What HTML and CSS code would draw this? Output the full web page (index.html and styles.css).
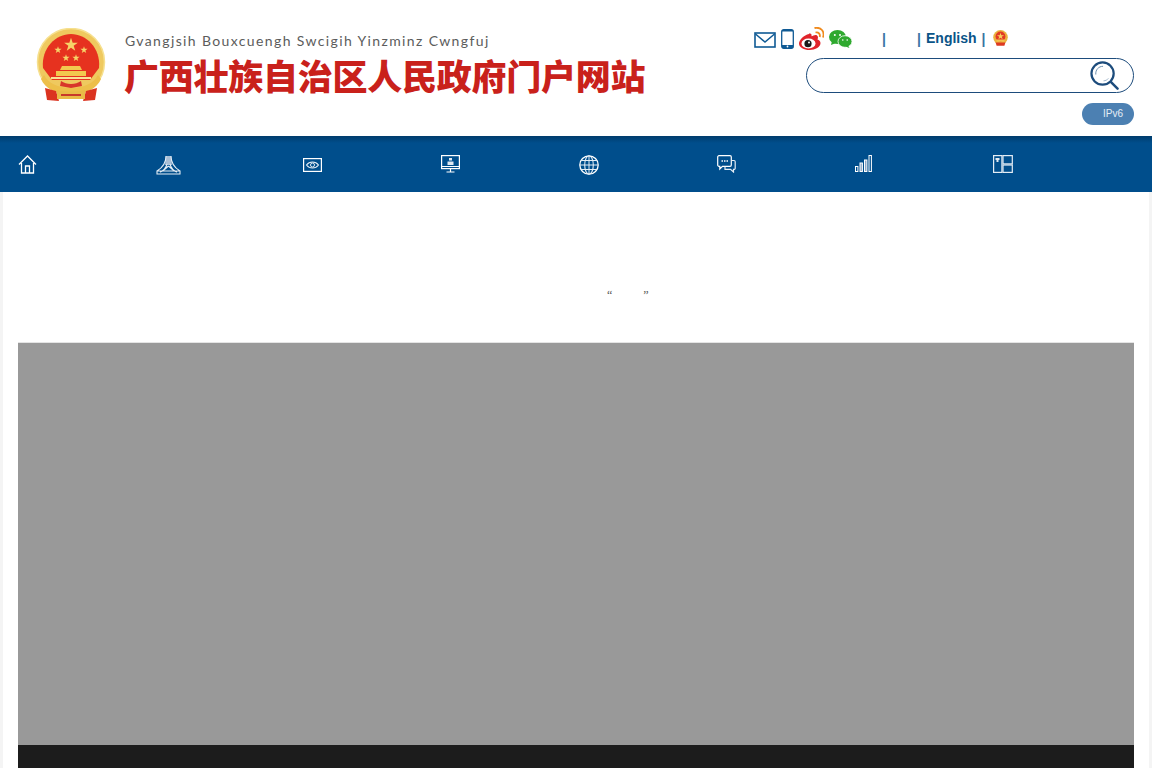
FILE: index.html
```html
<!DOCTYPE html>
<html lang="zh-CN">
<head>
<meta charset="utf-8">
<title>广西壮族自治区人民政府门户网站</title>
<link rel="stylesheet" href="styles.css">
</head>
<body>
<header class="header">
  <div class="brand">
    <svg class="emblem" viewBox="0 0 70 74" width="70" height="74">
      <defs><polygon id="star" points="0,-10 2.300,-3.100 9.500,-3.100 3.700,1.200 5.900,8.100 0,3.800 -5.900,8.100 -3.700,1.200 -9.500,-3.100 -2.300,-3.100" fill="#f6d468"/></defs>
      <circle cx="35" cy="34" r="33.500" fill="#efc95f"/>
      <circle cx="35" cy="34" r="33.500" fill="none" stroke="#f6e08f" stroke-width="1.500"/>
      <path d="M7 40C5 20 20 6 35 6s30 14 28 34L54 52H16z" fill="#e6321f"/>
      <use href="#star" transform="translate(35 17) scale(.72)"/>
      <use href="#star" transform="translate(22 22) scale(.38)"/>
      <use href="#star" transform="translate(48 22) scale(.38)"/>
      <use href="#star" transform="translate(30 30) scale(.38)"/>
      <use href="#star" transform="translate(40 30) scale(.38)"/>
      <path d="M26 38h18l2 4H24zM20 43h30v5H20z" fill="#f2c94f"/>
      <path d="M15 49h40v2H15z" fill="#f9e296"/>
      <path d="M8 47c4 8 14 13 27 13s23-5 27-13l3 4c-4 10-16 15-30 15S9 61 5 51z" fill="#edbf4a"/>
      <path d="M25 53c3 2 6 3 10 3s7-1 10-3l1 5-11 2-11-2z" fill="#d8362a"/>
      <path d="M9 60l11 3 3 10-12-1zM61 60l-11 3-3 10 12-1z" fill="#db3320"/>
      <path d="M21 62c5 2 23 2 28 0v9H21z" fill="#e9bb47"/>
      <path d="M25 67h20" stroke="#c8382a" stroke-width="2"/>
    </svg>
    <div class="brand-text">
      <p class="brand-latin">Gvangjsih Bouxcuengh Swcigih Yinzminz Cwngfuj</p>
      <h1 class="brand-title">广西壮族自治区人民政府门户网站</h1>
    </div>
  </div>
  <div class="tools">
    <div class="tool-row">
      <svg class="ic-mail" viewBox="0 0 22 16" width="22" height="16"><rect x="1" y="1" width="20" height="14" fill="none" stroke="#0f5a94" stroke-width="1.600"/><path d="M1.500 2l9.500 8 9.500-8" fill="none" stroke="#0f5a94" stroke-width="1.500"/></svg>
      <svg class="ic-phone" viewBox="0 0 13 20" width="13" height="20"><rect x="0.700" y="0.700" width="11.600" height="18.600" rx="2" fill="none" stroke="#0f5a94" stroke-width="1.300"/><path d="M1 16h11v3H1zM1 1h11v1.500H1z" fill="#0f5a94"/><circle cx="6.500" cy="17.500" r=".9" fill="#fff"/></svg>
      <svg class="ic-weibo" viewBox="0 0 25 23" width="25" height="23"><path d="M10 7C5 8 0 13 0 16.500 0 20.500 5 23 10.500 23c6 0 11-3 11-7 0-2-1.500-3-3-3.500 1-2 .5-4.500-2-4.500-1 0-3 1-4 1.200.3-2-.2-3.200-2.500-2.700z" fill="#e0242b"/><ellipse cx="9.500" cy="16.500" rx="7" ry="5" fill="#fff"/><circle cx="9" cy="16.700" r="3.600" fill="#1a1a1a"/><circle cx="10" cy="15.500" r="1" fill="#fff"/><path d="M16.500 5.500c3-.8 5 1.500 4.200 4.500M15.500 1c6.500-1.300 10.500 3.500 8.500 9.500" fill="none" stroke="#f08a1d" stroke-width="1.800"/></svg>
      <svg class="ic-wechat" viewBox="0 0 23 18" width="23" height="18"><ellipse cx="8.500" cy="7" rx="8.500" ry="7" fill="#2fa92f"/><path d="M3 11l-1 4 5-2z" fill="#2fa92f"/><ellipse cx="16" cy="11.500" rx="7" ry="5.800" fill="#2fa92f" stroke="#fff" stroke-width=".8"/><path d="M19 15.500l1.500 2.500-4-1.500z" fill="#2fa92f"/><circle cx="5.800" cy="5" r="1" fill="#fff"/><circle cx="11" cy="5" r="1" fill="#fff"/><circle cx="13.800" cy="10" r=".8" fill="#fff"/><circle cx="18.200" cy="10" r=".8" fill="#fff"/></svg>
      <span class="sep sep-a">|</span>
      <span class="sep sep-b">|</span>
      <a class="lang" href="#">English</a>
      <span class="sep sep-c">|</span>
      <svg class="ic-mini" viewBox="0 0 70 74" width="15" height="16"><circle cx="35" cy="34" r="34" fill="#eab23e"/><circle cx="35" cy="30" r="23" fill="#e23a24"/><polygon points="35,12 39,24 52,24 41,31 45,43 35,36 25,43 29,31 18,24 31,24" fill="#f6cf5b"/><path d="M16 44h38v10H16z" fill="#f2c550"/><path d="M12 58h46l-5 15H17z" fill="#dd3a22"/></svg>
    </div>
    <form class="search">
      <input class="search-input" type="text" aria-label="搜索">
      <svg class="search-icon" viewBox="0 0 30 30" width="30" height="30"><circle cx="13" cy="13" r="11.500" fill="none" stroke="#1d4c7c" stroke-width="2.300"/><path d="M21.500 21.500l7 7" stroke="#1d4c7c" stroke-width="2.600" stroke-linecap="round"/><path d="M6 14C5.500 9 9 5.500 13.500 5.500" fill="none" stroke="#6a8cab" stroke-width="1"/><path d="M14 20.500c2 0 4-1 5-2.500" fill="none" stroke="#9db3c8" stroke-width="1"/></svg>
    </form>
    <div class="ipv6">IPv6</div>
  </div>
</header>

<nav class="nav">
  <a class="nav-item" href="#"><svg viewBox="0 0 19 19" width="19" height="19"><path d="M1 9.500L9.500 1 18 9.500M3.500 8v10h12V8M7.500 18v-7h4v7" fill="none" stroke="#fff" stroke-width="1.300"/></svg></a>
  <a class="nav-item" href="#"><svg viewBox="0 0 25 20" width="25" height="20"><path d="M10 1h5l1 9H9z" fill="#a9bfd6"/><path d="M10 1C10 8 6 13 1 16M15 1c0 7 4 12 9 15M11 9c-1 4-4 7-7 8M14 9c1 4 4 7 7 8M1 16h23v3H1zM12.500 11c-2 2-4 4-8 6M12.500 11c2 2 4 4 8 6" fill="none" stroke="#e4edf5" stroke-width="1.100"/></svg></a>
  <a class="nav-item nav-shift" href="#"><svg class="nudge-eye" viewBox="0 0 19 14" width="19" height="14"><rect x=".6" y=".6" width="17.800" height="12.800" fill="none" stroke="#fff" stroke-width="1.200"/><path d="M3.500 7c3-4 9-4 12 0-3 4-9 4-12 0z" fill="none" stroke="#e4edf5" stroke-width="1.100"/><circle cx="9.500" cy="7" r="2" fill="none" stroke="#e4edf5"/></svg></a>
  <a class="nav-item nav-shift" href="#"><svg viewBox="0 0 19 18" width="19" height="18"><rect x=".6" y=".6" width="17.800" height="13" fill="none" stroke="#fff" stroke-width="1.200"/><path d="M.6 11.500h17.800M9.500 14v3M5.500 17h8" fill="none" stroke="#fff" stroke-width="1.200"/><path d="M8 3h3v2.500H8zM6.500 6.500h6V10h-6z" fill="#dfe8f1"/></svg></a>
  <a class="nav-item nav-shift" href="#"><svg viewBox="0 0 20 20" width="20" height="20"><circle cx="10" cy="10" r="9.200" fill="none" stroke="#fff" stroke-width="1.300"/><ellipse cx="10" cy="10" rx="4.300" ry="9.200" fill="none" stroke="#e4edf5" stroke-width="1.100"/><path d="M10 1v18M1 10h18M2.500 5.500h15M2.500 14.500h15" fill="none" stroke="#e4edf5" stroke-width="1"/></svg></a>
  <a class="nav-item nav-shift" href="#"><svg viewBox="0 0 19 18" width="19" height="18"><path d="M2 .7h11a1.300 1.300 0 0 1 1.300 1.300v8a1.300 1.300 0 0 1-1.300 1.300H5.500L2.800 14v-2.700H2A1.300 1.300 0 0 1 .7 10V2A1.300 1.300 0 0 1 2 .7z" fill="none" stroke="#fff" stroke-width="1.200"/><path d="M14.500 5.500H17a1.200 1.200 0 0 1 1.200 1.200v6.500A1.200 1.200 0 0 1 17 14.400h-.5V17l-3-2.600H8v-3" fill="none" stroke="#e4edf5" stroke-width="1.200"/><path d="M4.500 6h1.500M7 6h1.500M9.500 6H11" stroke="#fff" stroke-width="1.300"/></svg></a>
  <a class="nav-item nav-shift" href="#"><svg viewBox="0 0 17 17" width="17" height="17"><rect x=".5" y="11.500" width="2.400" height="5" fill="none" stroke="#fff"/><rect x="5" y="8" width="2.400" height="8.500" fill="#8ea9c6" stroke="#fff"/><rect x="9.500" y="5" width="2.400" height="11.500" fill="#8ea9c6" stroke="#fff"/><rect x="14" y=".5" width="2.400" height="16" fill="none" stroke="#fff"/></svg></a>
  <a class="nav-item nav-shift" href="#"><svg viewBox="0 0 20 18" width="20" height="18"><rect x=".6" y=".6" width="8.300" height="16.800" fill="none" stroke="#e4edf5" stroke-width="1.200"/><rect x="10" y=".6" width="9.300" height="8.300" fill="none" stroke="#e4edf5" stroke-width="1.200"/><rect x="10" y="10" width="9.300" height="7.400" fill="none" stroke="#e4edf5" stroke-width="1.200"/><path d="M2.500 3h4v2H5.500v2h-2V5h-1z" fill="#dfe8f1"/></svg></a>
</nav>

<main class="main">
  <p class="quote">“&emsp;&emsp;&ensp;&hairsp;”</p>
  <section class="banner"></section>
  <section class="dark"></section>
</main>
</body>
</html>
```
FILE: styles.css
```css
* { box-sizing: border-box; }
html, body { margin: 0; height: 768px; overflow: hidden; background: #fff; }
body { font-family: "Liberation Sans", "Noto Sans CJK SC", sans-serif; }

.header { display: flex; height: 136px; padding-right: 18px; }
.brand { display: flex; padding: 28px 0 0 36px; }
.emblem { flex: none; margin-right: 19px; }
.brand-text { display: flex; flex-direction: column; }
.brand-latin { margin: 4px 0 0; font: 400 14px/18px Lato, sans-serif; letter-spacing: 1.370px; color: #5c5c5c; white-space: nowrap; }
.brand-title { margin: 0 0 0 -1px; font: 900 35px/50px "Noto Sans CJK SC", sans-serif; color: #c9211b; letter-spacing: -0.250px; white-space: nowrap; }

.tools { width: 380px; margin-left: auto; padding-top: 27px; display: flex; flex-direction: column; }
.tool-row { display: flex; align-items: center; height: 23px; margin-bottom: 8px; }
.ic-mail { margin: 3px 5px 0 0; }
.ic-phone { margin: 1px 5px 0 0; }
.ic-weibo { margin-right: 4px; }
.ic-wechat { margin: 1px 0 0 1px; }
.sep { font-size: 14px; font-weight: 700; color: #3a74a3; width: 4px; margin-top: 1px; }
.sep-a { margin-left: 30px; }
.sep-b { margin-left: 31px; }
.lang { margin: -1px 0 0 5px; font-size: 14px; font-weight: 700; color: #0a5488; text-decoration: none; }
.sep-c { margin-left: 5px; }
.ic-mini { margin: -1px 0 0 7px; }

.search { position: relative; display: flex; align-self: flex-end; width: 328px; height: 35px; border: 1px solid #1d4c7c; border-radius: 18px; margin-bottom: 10px; }
.search-input { flex: 1; border: 0; background: none; outline: 0; }
.search-icon { flex: none; width: 29px; height: 29px; margin: 2px 14px 0 0; }

.ipv6 { align-self: flex-end; width: 52px; height: 22px; border-radius: 11px; background: #4c80b2; color: #e6eef6; font-size: 10px; line-height: 22px; text-align: right; padding-right: 11px; }

.nav { display: flex; height: 56px; padding: 19px 0 0 18px; background: linear-gradient(#003c6c, #004e8c 7px); }
.nav-item { flex: none; width: 138px; height: 24px; }
.nav-item svg { display: block; margin-top: 0; }
.nav-shift { padding-left: 9px; }
.nudge-eye { position: relative; top: 3px; }

.main { height: 576px; margin: 0; border-left: 3px solid #f4f4f4; border-right: 3px solid #f4f4f4; padding-left: 15px; padding-right: 15px; }
.quote { margin: 0; padding: 96px 0 0 589px; height: 151px; font: 12px/14px "Liberation Serif", serif; color: #555; white-space: pre; }
.banner { height: 402px; background: #999; box-shadow: 0 -1px 0 0 #e4e4e4; }
.dark { height: 23px; background: #1c1c1c; }
```
